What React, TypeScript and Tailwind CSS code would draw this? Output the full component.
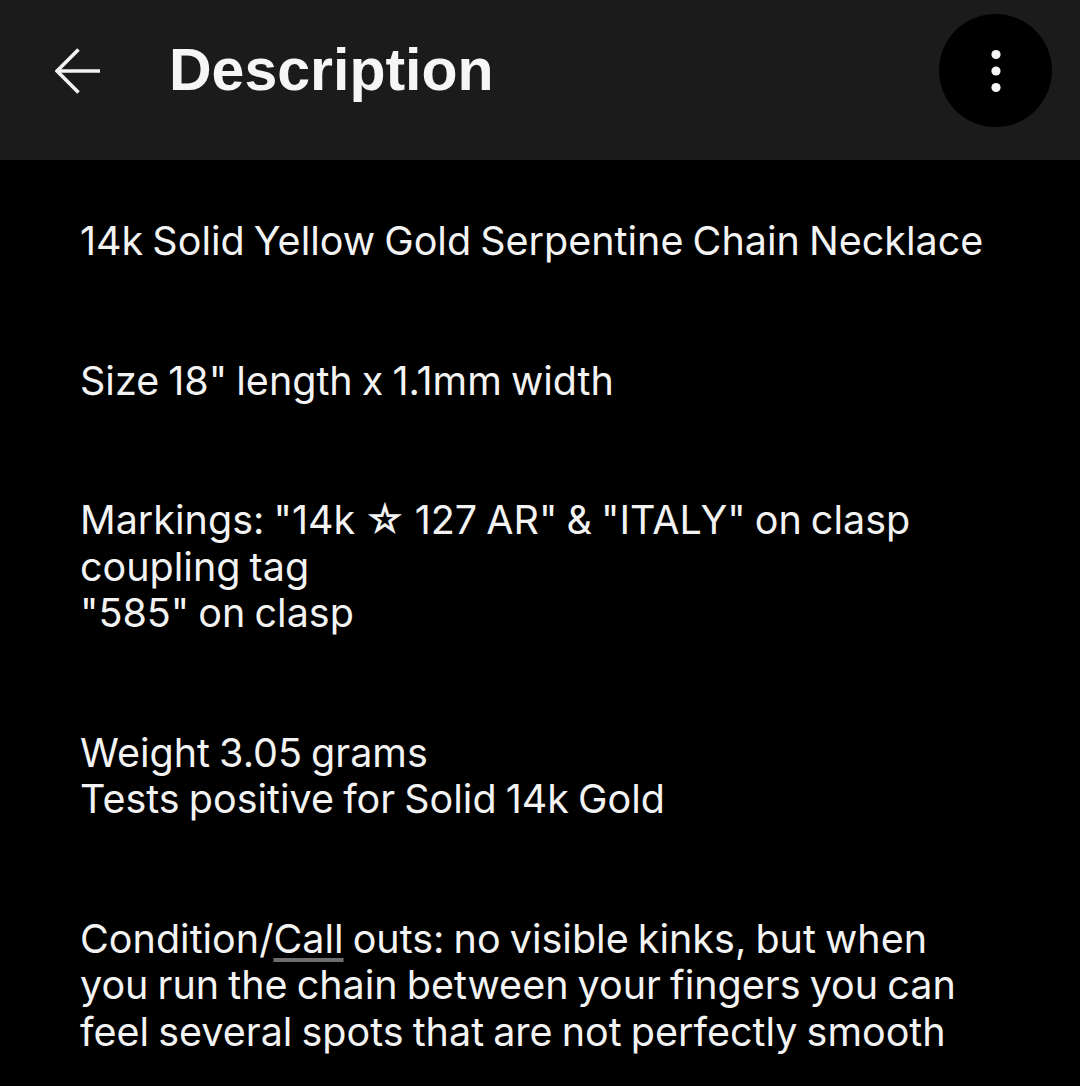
const paragraphs: React.ReactNode[] = [
  '14k Solid Yellow Gold Serpentine Chain Necklace',
  'Size 18" length x 1.1mm width',
  <>
    Markings: "14k ☆ 127 AR" &amp; "ITALY" on clasp
    <br />
    coupling tag
    <br />
    "585" on clasp
  </>,
  <>
    Weight 3.05 grams
    <br />
    Tests positive for Solid 14k Gold
  </>,
  <>
    Condition/
    <span className="underline decoration-[#6e6e6e] decoration-[4px] underline-offset-[5px]">Call</span> outs: no
    visible kinks, but when you run the chain between your fingers you can feel several spots that are not
    perfectly smooth
  </>,
];

function BackArrow() {
  return (
    <svg width="46" height="46" viewBox="0 0 46 46" fill="none" stroke="#f4f4f4" strokeWidth="3.6">
      <path d="M23.5 1.5 L2 23 L23.5 44.5" strokeLinejoin="miter" />
      <path d="M2 23 H45" />
    </svg>
  );
}

export default function App() {
  return (
    <div className="min-h-screen bg-black text-[#f3f3f3]" style={{ fontFamily: 'Inter, "DejaVu Sans", sans-serif' }}>
      <header className="h-[160px] bg-[#1b1b1b] flex items-start pt-[14px] pl-[55px] pr-[28px]">
        <div className="h-[113px] flex items-center">
          <BackArrow />
        </div>
        <h1
          className="h-[113px] flex items-center ml-[68px] text-[59px] font-bold text-[#f6f6f6]"
          style={{ fontFamily: '"Liberation Sans", Arial, sans-serif' }}
        >
          Description
        </h1>
        <button className="ml-auto w-[113px] h-[113px] rounded-full bg-black flex items-center justify-center">
          <svg width="10" height="44" viewBox="0 0 10 44" fill="#f6f6f6">
            <circle cx="5" cy="5.5" r="4.6" />
            <circle cx="5" cy="22" r="4.6" />
            <circle cx="5" cy="38.5" r="4.6" />
          </svg>
        </button>
      </header>

      <main className="pl-[80px] pr-[90px] pt-[58px] flex flex-col gap-[93px] text-[39.5px] leading-[46.5px] [word-spacing:-2px]">
        {paragraphs.map((p, i) => (
          <p key={i}>{p}</p>
        ))}
      </main>
    </div>
  );
}
